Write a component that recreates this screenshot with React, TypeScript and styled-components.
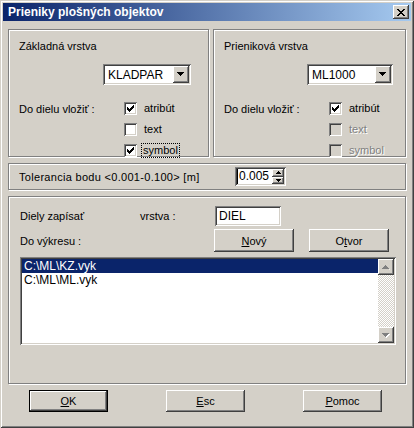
import React from "react";
import styled, { createGlobalStyle, css } from "styled-components";

const FACE = "#D4D0C8";
const SHADOW = "#808080";
const DARK = "#404040";

const GlobalStyle = createGlobalStyle`
   html, body {
      margin: 0;
      padding: 0;
      background: ${FACE};
   }
   body {
      font-family: "Liberation Sans", Arial, sans-serif;
      font-size: 11px;
      color: #000;
   }
`;

const raised = css`
   background: ${FACE};
   box-shadow: inset -1px -1px ${DARK}, inset 1px 1px #fff, inset -2px -2px ${SHADOW}, inset 2px 2px ${FACE};
`;

const sunken = css`
   box-shadow: inset 1px 1px ${SHADOW}, inset -1px -1px #fff, inset 2px 2px ${DARK}, inset -2px -2px ${FACE};
`;

const Window = styled.div`
   width: 414px;
   height: 428px;
   box-sizing: border-box;
   padding: 3px;
   background: ${FACE};
   box-shadow: inset 1px 1px ${FACE}, inset -1px -1px ${DARK}, inset 2px 2px #fff, inset -2px -2px ${SHADOW};
   display: flex;
   flex-direction: column;
`;

const TitleBar = styled.div`
   height: 18px;
   display: flex;
   align-items: center;
   justify-content: space-between;
   padding: 0 2px 0 5px;
   background: linear-gradient(to right, #0a246a, #a6caf0);
   color: #fff;
   font-weight: bold;
   font-size: 12px;
`;

const CloseButton = styled.div`
   ${raised};
   width: 16px;
   height: 14px;
   display: flex;
   align-items: center;
   justify-content: center;
`;

const Body = styled.div`
   flex: 1;
   display: flex;
   flex-direction: column;
   padding: 0 5px 0 5px;
`;

const TopRow = styled.div`
   display: flex;
   gap: 4px;
   margin-top: 8px;
`;

const Group = styled.div<{ $w?: number; $h: number }>`
   box-sizing: border-box;
   ${(p) => (p.$w ? `width: ${p.$w}px;` : "")}
   height: ${(p) => p.$h}px;
   border: 1px solid ${SHADOW};
   box-shadow: inset 1px 1px #fff, 1px 1px #fff;
   position: relative;
`;

const LayerGroup = styled(Group)`
   padding: 10px 0 0 10px;
`;

const Caption = styled.div`
   height: 13px;
   line-height: 13px;
`;

const ComboRow = styled.div<{ $right: number }>`
   display: flex;
   justify-content: flex-end;
   margin-top: 11px;
   padding-right: ${(p) => p.$right}px;
`;

const Combo = styled.div<{ $w: number }>`
   ${sunken};
   box-sizing: border-box;
   width: ${(p) => p.$w}px;
   height: 21px;
   background: #fff;
   display: flex;
   align-items: center;
   padding: 2px;
`;

const ComboText = styled.div`
   flex: 1;
   padding-left: 3px;
   font-size: 12px;
`;

const DropButton = styled.div`
   ${raised};
   width: 16px;
   height: 17px;
   display: flex;
   align-items: center;
   justify-content: center;
`;

const Options = styled.div`
   display: grid;
   grid-template-columns: 105px auto;
   grid-auto-rows: 21px;
   margin-top: 13px;
   align-items: center;
`;

const OptionLabel = styled.div`
   display: flex;
   align-items: center;
`;

const Box = styled.div<{ $disabled?: boolean }>`
   ${sunken};
   width: 13px;
   height: 13px;
   background: ${(p) => (p.$disabled ? FACE : "#fff")};
   display: flex;
   align-items: center;
   justify-content: center;
   flex: none;
`;

const BoxText = styled.span<{ $disabled?: boolean; $focus?: boolean }>`
   padding: 0 1px;
   line-height: 13px;
   color: ${(p) => (p.$disabled ? SHADOW : "#000")};
   text-shadow: ${(p) => (p.$disabled ? "1px 1px #fff" : "none")};
   outline: ${(p) => (p.$focus ? "1px dotted #000" : "none")};
   margin-left: ${(p) => (p.$focus ? "5px" : "6px")};
`;

const TolGroup = styled(Group)`
   margin-top: 6px;
   display: flex;
   align-items: center;
   padding-left: 10px;
`;

const TolLabel = styled.div`
   width: 216px;
   letter-spacing: 0.3px;
`;

const Spin = styled.div`
   ${sunken};
   box-sizing: border-box;
   width: 51px;
   height: 19px;
   background: #fff;
   display: flex;
   padding: 2px;
`;

const SpinText = styled.div`
   flex: 1;
   padding-left: 1px;
   line-height: 15px;
   font-size: 12px;
   border-left: 1px solid #000;
`;

const SpinButtons = styled.div`
   width: 12px;
   display: flex;
   flex-direction: column;
`;

const SpinHalf = styled.div`
   ${raised};
   flex: 1;
   display: flex;
   align-items: center;
   justify-content: center;
`;

const FilesGroup = styled(Group)`
   margin-top: 6px;
   padding: 8px 9px 0 11px;
`;

const FieldRow = styled.div`
   display: flex;
   align-items: center;
   height: 21px;
`;

const FieldLabel = styled.div<{ $w: number }>`
   width: ${(p) => p.$w}px;
`;

const Edit = styled.div`
   ${sunken};
   box-sizing: border-box;
   width: 66px;
   height: 20px;
   background: #fff;
   padding: 3px 4px;
   font-size: 12px;
   line-height: 14px;
`;

const ButtonRow = styled.div<{ $gap: number }>`
   display: flex;
   gap: ${(p) => p.$gap}px;
`;

const Button = styled.div<{ $w: number; $h: number; $default?: boolean }>`
   box-sizing: border-box;
   width: ${(p) => p.$w}px;
   height: ${(p) => p.$h}px;
   display: flex;
   align-items: center;
   justify-content: center;
   background: ${FACE};
   box-shadow: ${(p) =>
      p.$default
         ? `inset 0 0 0 1px #000, inset -2px -2px ${DARK}, inset 2px 2px #fff, inset -3px -3px ${SHADOW}`
         : `inset -1px -1px ${DARK}, inset 1px 1px #fff, inset -2px -2px ${SHADOW}`};
`;

const FilesTop = styled.div`
   margin-top: 3px;
   height: 23px;
   display: flex;
   align-items: center;
`;

const List = styled.div`
   ${sunken};
   box-sizing: border-box;
   margin-top: 5px;
   width: 376px;
   height: 88px;
   background: #fff;
   padding: 2px;
   display: flex;
`;

const ListItems = styled.div`
   flex: 1;
`;

const ListItem = styled.div<{ $selected?: boolean }>`
   height: 14px;
   line-height: 14px;
   padding-left: 2px;
   font-size: 12px;
   background: ${(p) => (p.$selected ? "#0a246a" : "transparent")};
   color: ${(p) => (p.$selected ? "#fff" : "#000")};
`;

const ScrollBar = styled.div`
   width: 16px;
   display: flex;
   flex-direction: column;
   justify-content: space-between;
   background-image: repeating-conic-gradient(#fff 0 25%, ${FACE} 0 50%);
   background-size: 2px 2px;
`;

const ScrollButton = styled.div`
   ${raised};
   height: 16px;
   display: flex;
   align-items: center;
   justify-content: center;
`;

const Footer = styled.div`
   display: flex;
   justify-content: space-between;
   padding: 6px 24px 0 21px;
`;

const U = styled.span`
   text-decoration: underline;
`;

const Arrow = ({ up, color = "#000", shade }: { up?: boolean; color?: string; shade?: boolean }) => (
   <svg width="8" height="5" viewBox="0 0 8 5">
      {shade && (
         <path d={up ? "M4 1h1v1h1v1h1v1h1v1H1V5h7" : "M1 1h7v1H7v1H6v1H5v1H4"} fill="#fff" />
      )}
      <path d={up ? "M3 0h1v1h1v1h1v1h1v1H0V3h1V2h1V1h1z" : "M0 0h7v1H6v1H5v1H4v1H3V3H2V2H1V1H0z"} fill={color} />
   </svg>
);

const SmallArrow = ({ up }: { up?: boolean }) => (
   <svg width="5" height="3" viewBox="0 0 5 3">
      <path d={up ? "M2 0h1v1h1v1h1v1H0V2h1V1h1z" : "M0 0h5v1H4v1H3v1H2V2H1V1H0z"} fill="#000" />
   </svg>
);

const Check = ({ color = "#000" }: { color?: string }) => (
   <svg width="7" height="7" viewBox="0 0 7 7">
      <path d="M0 2h1v3H0zM1 3h1v3H1zM2 4h1v3H2zM3 3h1v3H3zM4 2h1v3H4zM5 1h1v3H5zM6 0h1v3H6z" fill={color} />
   </svg>
);

type Opt = { label: string; checked?: boolean; disabled?: boolean; focus?: boolean };

const CheckOption = ({ label, checked, disabled, focus }: Opt) => (
   <OptionLabel>
      <Box $disabled={disabled}>{checked && <Check />}</Box>
      <BoxText $disabled={disabled} $focus={focus}>
         {label}
      </BoxText>
   </OptionLabel>
);

const LayerBox = ({
   title,
   value,
   width,
   comboW,
   comboRight,
   options,
}: {
   title: string;
   value: string;
   width: number;
   comboW: number;
   comboRight: number;
   options: Opt[];
}) => (
   <LayerGroup $w={width} $h={128}>
      <Caption>{title}</Caption>
      <ComboRow $right={comboRight}>
         <Combo $w={comboW}>
            <ComboText>{value}</ComboText>
            <DropButton>
               <Arrow />
            </DropButton>
         </Combo>
      </ComboRow>
      <Options>
         <div>Do dielu vložiť :</div>
         <CheckOption {...options[0]} />
         <div />
         <CheckOption {...options[1]} />
         <div />
         <CheckOption {...options[2]} />
      </Options>
   </LayerGroup>
);

export default function App() {
   return (
      <>
         <GlobalStyle />
         <Window>
            <TitleBar>
               <span>Prieniky plošných objektov</span>
               <CloseButton>
                  <svg width="8" height="7" viewBox="0 0 8 7">
                     <path
                        d="M0 0h2v1h1v1h2V1h1V0h2v1H7v1H6v1H5v1h1v1h1v1h1v1H6V6H5V5H3v1H2v1H0V6h1V5h1V4h1V3H2V2H1V1H0z"
                        fill="#000"
                     />
                  </svg>
               </CloseButton>
            </TitleBar>
            <Body>
               <TopRow>
                  <LayerBox
                     title="Základná vrstva"
                     value="KLADPAR"
                     width={201}
                     comboW={88}
                     comboRight={17}
                     options={[
                        { label: "atribút", checked: true },
                        { label: "text" },
                        { label: "symbol", checked: true, focus: true },
                     ]}
                  />
                  <LayerBox
                     title="Prieniková vrstva"
                     value="ML1000"
                     width={193}
                     comboW={86}
                     comboRight={12}
                     options={[
                        { label: "atribút", checked: true },
                        { label: "text", disabled: true },
                        { label: "symbol", disabled: true },
                     ]}
                  />
               </TopRow>
               <TolGroup $h={27}>
                  <TolLabel>Tolerancia bodu &lt;0.001-0.100&gt; [m]</TolLabel>
                  <Spin>
                     <SpinText>0.005</SpinText>
                     <SpinButtons>
                        <SpinHalf>
                           <SmallArrow up />
                        </SpinHalf>
                        <SpinHalf>
                           <SmallArrow />
                        </SpinHalf>
                     </SpinButtons>
                  </Spin>
               </TolGroup>
               <FilesGroup $h={188}>
                  <FieldRow>
                     <FieldLabel $w={120}>Diely zapísať</FieldLabel>
                     <FieldLabel $w={75}>vrstva :</FieldLabel>
                     <Edit>DIEL</Edit>
                  </FieldRow>
                  <FilesTop>
                     <FieldLabel $w={194}>Do výkresu :</FieldLabel>
                     <ButtonRow $gap={15}>
                        <Button $w={80} $h={23}>
                           <span>
                              <U>N</U>ový
                           </span>
                        </Button>
                        <Button $w={80} $h={23}>
                           <span>
                              O<U>t</U>vor
                           </span>
                        </Button>
                     </ButtonRow>
                  </FilesTop>
                  <List>
                     <ListItems>
                        <ListItem $selected>C:\ML\KZ.vyk</ListItem>
                        <ListItem>C:\ML\ML.vyk</ListItem>
                     </ListItems>
                     <ScrollBar>
                        <ScrollButton>
                           <Arrow up color={SHADOW} shade />
                        </ScrollButton>
                        <ScrollButton>
                           <Arrow color={SHADOW} shade />
                        </ScrollButton>
                     </ScrollBar>
                  </List>
               </FilesGroup>
               <Footer>
                  <Button $w={79} $h={22} $default>
                     <span>
                        <U>O</U>K
                     </span>
                  </Button>
                  <Button $w={79} $h={22}>
                     <span>
                        <U>E</U>sc
                     </span>
                  </Button>
                  <Button $w={79} $h={22}>
                     <span>
                        <U>P</U>omoc
                     </span>
                  </Button>
               </Footer>
            </Body>
         </Window>
      </>
   );
}
